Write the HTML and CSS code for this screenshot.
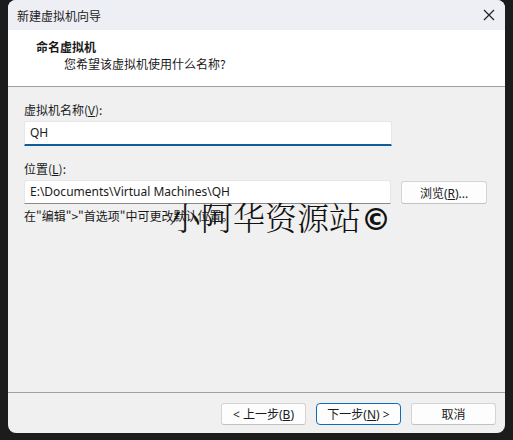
FILE: index.html
```html
<!DOCTYPE html>
<html lang="zh-CN">
<head>
  <meta charset="UTF-8">
  <meta name="viewport" content="width=device-width, initial-scale=1.0">
  <title>新建虚拟机向导</title>
  <link rel="stylesheet" href="styles.css">
</head>
<body>
  <div class="dialog">
    <div class="titlebar">
      <span class="title">新建虚拟机向导</span>
      <svg class="close" width="12" height="12" viewBox="0 0 12 12">
        <path d="M1 1 L11 11 M11 1 L1 11" stroke="#222" stroke-width="1.2" fill="none"/>
      </svg>
    </div>

    <div class="header">
      <h2>命名虚拟机</h2>
      <p>您希望该虚拟机使用什么名称?</p>
    </div>

    <div class="content">
      <label class="field-label">虚拟机名称(<u>V</u>):</label>
      <div class="input focused">QH</div>

      <label class="field-label second">位置(<u>L</u>):</label>
      <div class="row">
        <div class="input">E:\Documents\Virtual Machines\QH</div>
        <button class="btn browse">浏览(<u>R</u>)...</button>
      </div>

      <p class="note">在"编辑"&gt;"首选项"中可更改默认位置。</p>
      <span class="watermark">小阿华资源站<b class="copy">©</b></span>
    </div>

    <div class="footer">
      <button class="btn">&lt; 上一步(<u>B</u>)</button>
      <button class="btn primary">下一步(<u>N</u>) &gt;</button>
      <button class="btn">取消</button>
    </div>
  </div>
</body>
</html>
```

FILE: styles.css
```css
body {
  margin: 0;
  padding: 0;
  background-color: #1c1c1c;
  font-family: "Noto Sans", "Noto Sans CJK SC", sans-serif;
  font-size: 12px;
  color: #1a1a1a;
}

.dialog {
  width: 497px;
  height: 433px;
  margin-left: 8px;
  background-color: #f0f0f0;
  border-radius: 8px;
  overflow: hidden;
  display: flex;
  flex-direction: column;
}

.titlebar {
  height: 30px;
  flex: 0 0 30px;
  background-color: #eeeef5;
  display: flex;
  align-items: center;
  justify-content: space-between;
  padding: 0 10px 0 9px;
}

.title {
  font-family: "Noto Sans CJK SC", sans-serif;
  font-size: 12px;
  color: #222;
}

.header {
  background-color: #ffffff;
  height: 57px;
  border-bottom: 1px solid #a0a0a0;
  padding: 8px 0 0 28px;
  box-sizing: border-box;
}

.header h2 {
  margin: 0;
  font-family: "Noto Sans CJK SC", sans-serif;
  font-size: 12px;
  font-weight: bold;
  line-height: 17px;
}

.header p {
  margin: 0 0 0 28px;
  font-family: "Noto Sans CJK SC", sans-serif;
  font-size: 12px;
  line-height: 17px;
}

.content {
  position: relative;
  flex: 1;
  padding: 16px 18px 0 16px;
  border-bottom: 1px solid #a0a0a0;
}

.field-label {
  display: block;
  line-height: 14px;
  font-family: "Noto Sans CJK SC", sans-serif;
  height: 14px;
}

.field-label.second {
  margin-top: 16px;
}

.input {
  width: 368px;
  height: 24px;
  box-sizing: border-box;
  margin-top: 4px;
  background-color: #ffffff;
  border: 1px solid #e6e6e6;
  border-bottom: 1px solid #8a8a8a;
  padding: 0 5px;
  line-height: 22px;
  border-radius: 3px 3px 0 0;
  white-space: nowrap;
}

.input.focused {
  height: 25px;
  border-bottom: 2px solid #0e5e9e;
}

.row {
  display: flex;
  align-items: flex-start;
  gap: 10px;
}

.btn {
  font-family: "Noto Sans", "Noto Sans CJK SC", sans-serif;
  font-size: 12px;
  color: #1a1a1a;
  background-color: #fdfdfd;
  border: 1px solid #d4d4d4;
  border-bottom-color: #c2c2c2;
  border-radius: 3px;
  height: 22px;
  padding: 0;
  width: 85px;
}

.browse {
  margin-top: 5px;
  width: 86px;
  height: 23px;
}

.note {
  margin: 5px 0 0;
  line-height: 14px;
  font-family: "Noto Sans CJK SC", sans-serif;
}

.watermark {
  position: absolute;
  left: 161px;
  top: 111px;
  font-family: "Noto Serif CJK SC", "Noto Sans CJK SC", serif;
  font-weight: 300;
  font-size: 32px;
  line-height: 36px;
  color: #111;
}

.watermark .copy {
  font-family: "DejaVu Sans", sans-serif;
  font-weight: bold;
  font-size: 30px;
}

.footer {
  height: 40px;
  flex: 0 0 40px;
  display: flex;
  justify-content: flex-end;
  align-items: flex-start;
  gap: 10px;
  padding: 10px 9px 0 0;
  box-sizing: border-box;
}

.footer .btn {
  height: 22px;
}

.primary {
  border: 1px solid #0f6cbd;
  border-radius: 4px;
}
```
